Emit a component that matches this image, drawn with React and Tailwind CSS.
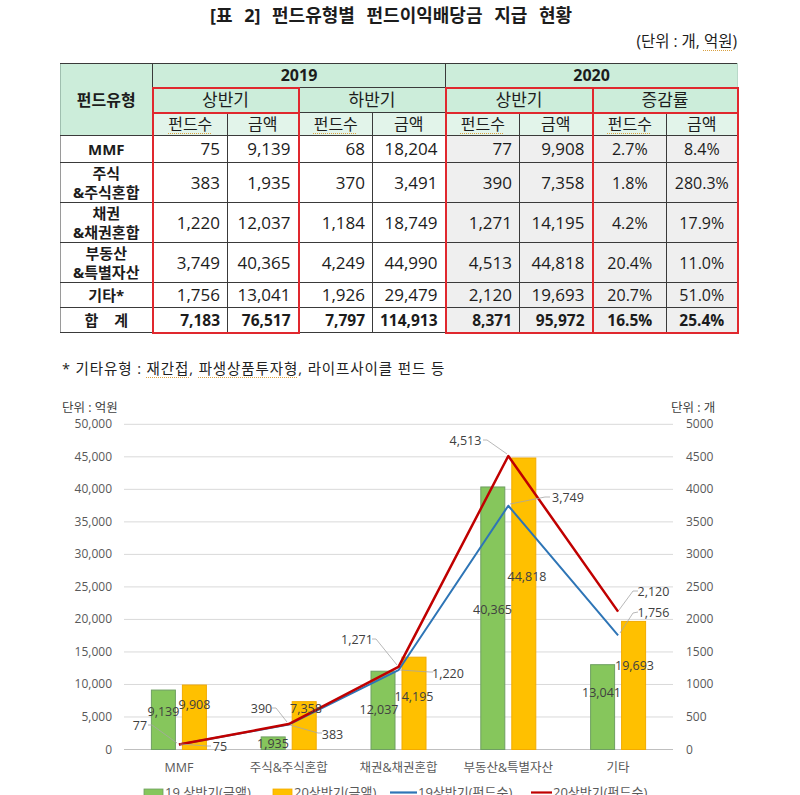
import React from "react";

const RED = "border-[#e0282e]";

const rows = [
  { label: ["MMF"], h: "h-[27px]", v: ["75", "9,139", "68", "18,204", "77", "9,908", "2.7%", "8.4%"] },
  { label: ["주식", "&주식혼합"], h: "h-[40px]", v: ["383", "1,935", "370", "3,491", "390", "7,358", "1.8%", "280.3%"] },
  { label: ["채권", "&채권혼합"], h: "h-[40px]", v: ["1,220", "12,037", "1,184", "18,749", "1,271", "14,195", "4.2%", "17.9%"] },
  { label: ["부동산", "&특별자산"], h: "h-[40px]", v: ["3,749", "40,365", "4,249", "44,990", "4,513", "44,818", "20.4%", "11.0%"] },
  { label: ["기타*"], h: "h-[25px]", v: ["1,756", "13,041", "1,926", "29,479", "2,120", "19,693", "20.7%", "51.0%"] },
  { label: ["합 계"], h: "h-[25px]", bold: true, v: ["7,183", "76,517", "7,797", "114,913", "8,371", "95,972", "16.5%", "25.4%"] },
];

function cellClass(c, last, bold) {
  const parts = ["border border-[#3a3a3a] p-0"];
  parts.push(c >= 4 ? "bg-[#efefef]" : "bg-white");
  parts.push(c >= 6 ? "text-center" : "text-right pr-[7px]");
  if (bold) parts.push("font-bold text-[15.5px]");
  else parts.push(c >= 6 ? "text-[16px]" : "text-[17px]");
  if (c === 0 || c === 4 || c === 6) parts.push("border-l-2 border-l-[#e0282e]");
  if (c === 1 || c === 5 || c === 7) parts.push("border-r-2 border-r-[#e0282e]");
  if (last && c !== 2 && c !== 3) parts.push("border-b-2 border-b-[#e0282e]");
  return parts.join(" ");
}

const Spell = ({ children }) => (
  <span className="underline decoration-dotted decoration-[#d9a040] decoration-1 underline-offset-[3px]">{children}</span>
);

const FONT = "Open Sans, Noto Sans CJK KR, sans-serif";
const cx = (i) => 124 + 109.8 * (i + 0.5);
const yL = (v) => 747.5 - v * 0.006504;
const yR = (v) => 747.5 - v * 0.06504;

const cats = ["MMF", "주식&주식혼합", "채권&채권혼합", "부동산&특별자산", "기타"];
const g19 = [9139, 1935, 12037, 40365, 13041];
const o20 = [9908, 7358, 14195, 44818, 19693];
const b19 = [75, 383, 1220, 3749, 1756];
const r20 = [77, 390, 1271, 4513, 2120];

const labels = [
  ["9,139", 163.5, 709],
  ["9,908", 194.5, 702],
  ["77", 140, 723],
  ["75", 220, 744],
  ["390", 261.5, 706],
  ["7,358", 306, 706],
  ["383", 332.5, 732],
  ["1,935", 273, 741],
  ["1,271", 357, 637],
  ["12,037", 379, 707],
  ["14,195", 414, 694],
  ["1,220", 448, 671],
  ["4,513", 465.5, 438],
  ["3,749", 568, 495],
  ["44,818", 527, 574],
  ["40,365", 492.5, 607],
  ["2,120", 653.5, 589],
  ["1,756", 653.5, 610],
  ["13,041", 601.5, 690],
  ["19,693", 634.5, 663],
];

const leaders = [
  "148,723 152,723 177,741",
  "180,742 207,744 211,744",
  "272,706 276,706 287,720",
  "290,723 318,731 322,731",
  "372,637 376,637 397,663",
  "400,668 430,670 433,670",
  "483,438 487,438 507,452",
  "510,502 545,495 550,495",
  "638,589 633,589 619,608",
  "638,610 633,611 620,631",
];

function Chart() {
  const grid = Array.from({ length: 11 }, (_, k) => k);
  const pts = (arr) => arr.map((v, i) => `${cx(i).toFixed(1)},${yR(v).toFixed(1)}`).join(" ");
  return (
    <svg width="800" height="415" viewBox="0 380 800 415" className="block" fontFamily={FONT}>
      <text x="62" y="409.5" fontSize="12.5" fill="#404040">단위 : 억원</text>
      <text x="671" y="409.5" fontSize="12.5" fill="#404040">단위 : 개</text>
      {grid.map((k) => {
        const y = 747.5 - k * 32.52;
        return (
          <g key={k}>
            <line x1="124" x2="673" y1={y} y2={y} stroke={k === 0 ? "#bfbfbf" : "#d9d9d9"} strokeWidth="1" />
            <text x="112" y={y + 4} fontSize="12" fill="#595959" textAnchor="end">
              {(k * 5000).toLocaleString("en-US")}
            </text>
            <text x="686" y={y + 4} fontSize="12" fill="#595959">
              {k * 500}
            </text>
          </g>
        );
      })}
      {cats.map((c, i) => (
        <g key={c}>
          <rect x={cx(i) - 27.5} y={yL(g19[i])} width="24" height={747.5 - yL(g19[i])} fill="#86c65c" stroke="#6f9f62" strokeWidth="1" />
          <rect x={cx(i) + 3.5} y={yL(o20[i])} width="24" height={747.5 - yL(o20[i])} fill="#ffc000" stroke="#f2aa00" strokeWidth="1" />
          <text x={cx(i)} y="769.5" fontSize="12.5" fill="#595959" textAnchor="middle">{c}</text>
        </g>
      ))}
      <polyline points={pts(b19)} fill="none" stroke="#2e75b6" strokeWidth="2" strokeLinejoin="round" />
      <polyline points={pts(r20)} fill="none" stroke="#c00000" strokeWidth="2.5" strokeLinejoin="round" />
      {leaders.map((p, i) => (
        <polyline key={i} points={p} fill="none" stroke="#a6a6a6" strokeWidth="0.8" />
      ))}
      {labels.map(([t, x, y]) => (
        <text key={t} x={x} y={y + 4.5} fontSize="12.5" fill="#404040" textAnchor="middle">{t}</text>
      ))}
      <rect x="144" y="787" width="19" height="7" fill="#86c65c" stroke="#6f9f62" strokeWidth="0.8" />
      <text x="165" y="795" fontSize="13" fill="#595959">19 상반기(금액)</text>
      <rect x="273" y="787" width="19" height="7" fill="#ffc000" stroke="#f2aa00" strokeWidth="0.8" />
      <text x="294" y="795" fontSize="13" fill="#595959">20상반기(금액)</text>
      <line x1="390" x2="417" y1="790.5" y2="790.5" stroke="#2e75b6" strokeWidth="2.2" />
      <text x="418" y="795" fontSize="13" fill="#595959">19상반기(펀드수)</text>
      <line x1="531" x2="552" y1="790.5" y2="790.5" stroke="#c00000" strokeWidth="2.2" />
      <text x="553" y="795" fontSize="13" fill="#595959">20상반기(펀드수)</text>
    </svg>
  );
}

export default function App() {
  const hdr = "border border-[#3a3a3a] p-0 text-center";
  const mint = "bg-[#ccedda]";
  const mint2 = "bg-[#e2f4ea]";
  return (
    <div className="w-[800px] h-[795px] overflow-hidden bg-white font-['Open_Sans','Noto_Sans_CJK_KR',sans-serif] text-[#1c1c1c]">
      <div className="h-[30px] flex items-center justify-center pr-[18px] text-[18px] font-bold leading-none">
        <span className="[word-spacing:7px]">[표 2] 펀드유형별 펀드이익배당금 지급 현황</span>
      </div>
      <div className="h-[24px] flex items-center justify-end pr-[63px] text-[15.5px] leading-none">
        <span>
          (단위 : 개, <Spell>억원</Spell>)
        </span>
      </div>
      <div className="pl-[60px] mt-[9px]">
        <table className="table-fixed border-collapse w-[677px] text-[16px] leading-[18px]">
          <colgroup>
            <col className="w-[92px]" />
            <col className="w-[75px]" />
            <col className="w-[71px]" />
            <col className="w-[74px]" />
            <col className="w-[73px]" />
            <col className="w-[74px]" />
            <col className="w-[73px]" />
            <col className="w-[74px]" />
            <col className="w-[71px]" />
          </colgroup>
          <thead>
            <tr className="h-[24px]">
              <th rowSpan={3} className={`${hdr} ${mint} border-l-[#9fbfaf] text-[16px] font-bold`}>펀드유형</th>
              <th colSpan={4} className={`${hdr} ${mint} text-[16px] font-bold`}>2019</th>
              <th colSpan={4} className={`${hdr} ${mint} border-r-[#b8d8c8] text-[16px] font-bold`}>2020</th>
            </tr>
            <tr className="h-[25px]">
              <th colSpan={2} className={`${hdr} ${mint} font-normal text-[17px] border-2 ${RED}`}>상반기</th>
              <th colSpan={2} className={`${hdr} ${mint} font-normal text-[17px]`}>하반기</th>
              <th colSpan={2} className={`${hdr} ${mint} font-normal text-[17px] border-2 ${RED}`}>상반기</th>
              <th colSpan={2} className={`${hdr} ${mint} font-normal text-[17px] border-2 ${RED}`}>증감률</th>
            </tr>
            <tr className="h-[23px]">
              {[0, 1, 2, 3, 4, 5, 6, 7].map((c) => (
                <th
                  key={c}
                  className={`${hdr} ${mint2} font-normal text-[16px] ${c === 0 || c === 4 || c === 6 ? "border-l-2 border-l-[#e0282e]" : ""} ${c === 1 || c === 5 || c === 7 ? "border-r-2 border-r-[#e0282e]" : ""}`}
                >
                  {c % 2 === 0 ? <Spell>펀드수</Spell> : "금액"}
                </th>
              ))}
            </tr>
          </thead>
          <tbody>
            {rows.map((r, ri) => {
              const last = ri === rows.length - 1;
              return (
                <tr key={ri} className={r.h}>
                  <td className={`border border-[#3a3a3a] border-l-[#9a9a9a] p-0 text-center font-bold text-[15px] leading-[19px] bg-white ${last ? "tracking-[6px] pl-[6px]" : ""}`}>
                    {r.label.map((l) => (
                      <div key={l}>{l}</div>
                    ))}
                  </td>
                  {r.v.map((v, c) => (
                    <td key={c} className={cellClass(c, last, r.bold)}>
                      {v}
                    </td>
                  ))}
                </tr>
              );
            })}
          </tbody>
        </table>
      </div>
      <div className="h-[24px] mt-[24px] pl-[62px] flex items-center text-[14.5px] leading-none text-[#222]">
        <span className="tracking-[0.9px]">
          * 기타유형 : <Spell>재간접</Spell>, <Spell>파생상품투자형</Spell>, 라이프사이클 펀드 등
        </span>
      </div>
      <Chart />
    </div>
  );
}
